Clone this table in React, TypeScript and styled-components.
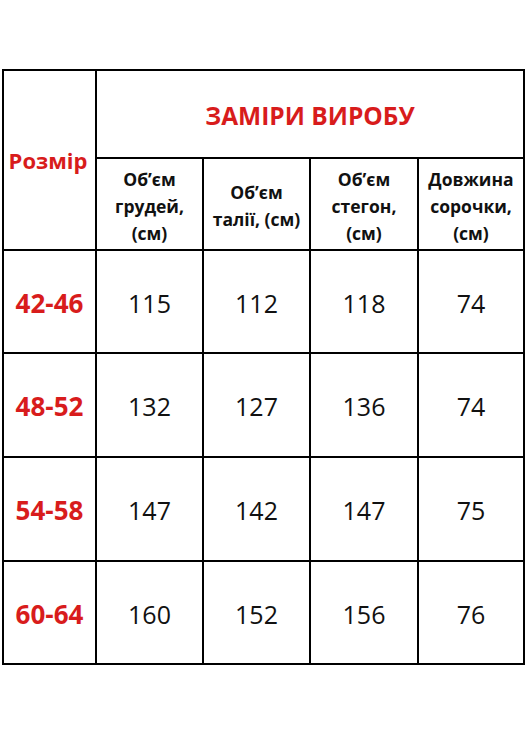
import React from "react";
import styled, { createGlobalStyle } from "styled-components";

const GlobalStyle = createGlobalStyle`
  html, body {
    margin: 0;
    padding: 0;
    background: #ffffff;
  }
  body {
    font-family: "Open Sans", "Liberation Sans", sans-serif;
    color: #111111;
  }
`;

const rows = [
  { size: "42-46", values: ["115", "112", "118", "74"] },
  { size: "48-52", values: ["132", "127", "136", "74"] },
  { size: "54-58", values: ["147", "142", "147", "75"] },
  { size: "60-64", values: ["160", "152", "156", "76"] },
];

const headers = [
  ["Об’єм", "грудей,", "(см)"],
  ["Об’єм", "талії, (см)"],
  ["Об’єм", "стегон,", "(см)"],
  ["Довжина", "сорочки,", "(см)"],
];

export default function App() {
  return (
    <>
      <GlobalStyle />
      <Page>
        <Table>
          <SizeHead>Розмір</SizeHead>
          <Title>ЗАМІРИ ВИРОБУ</Title>
          {headers.map((lines, i) => (
            <SubHead key={i}>
              {lines.map((l) => (
                <span key={l}>{l}</span>
              ))}
            </SubHead>
          ))}
          {rows.map((r) => (
            <React.Fragment key={r.size}>
              <SizeCell>{r.size}</SizeCell>
              {r.values.map((v, i) => (
                <ValueCell key={i}>{v}</ValueCell>
              ))}
            </React.Fragment>
          ))}
        </Table>
      </Page>
    </>
  );
}

const Page = styled.div`
  width: 529px;
  height: 736px;
  padding: 69px 0 0 2px;
  box-sizing: border-box;
  background: #ffffff;
`;

const Table = styled.div`
  display: grid;
  grid-template-columns: 91px 105px 105px 106px 104px;
  grid-template-rows: 86px 90px 101px 102px 102px 101px;
  gap: 2px;
  padding: 2px;
  width: max-content;
  background: #000000;
`;

const Cell = styled.div`
  background: #ffffff;
  display: flex;
  align-items: center;
  justify-content: center;
  text-align: center;
`;

const SizeHead = styled(Cell)`
  grid-row: 1 / span 2;
  color: #d81c1c;
  font-weight: 700;
  font-size: 22px;
  padding-right: 3px;
`;

const Title = styled(Cell)`
  grid-column: 2 / span 4;
  color: #d81c1c;
  font-weight: 700;
  font-size: 24.5px;
  padding-top: 2px;
`;

const SubHead = styled(Cell)`
  flex-direction: column;
  font-weight: 700;
  font-size: 17.5px;
  line-height: 27px;
  padding-top: 4px;
`;

const SizeCell = styled(Cell)`
  color: #d81c1c;
  font-weight: 700;
  font-size: 26px;
  padding-top: 2px;
`;

const ValueCell = styled(Cell)`
  font-size: 25px;
  color: #111111;
  padding-top: 2px;
`;
